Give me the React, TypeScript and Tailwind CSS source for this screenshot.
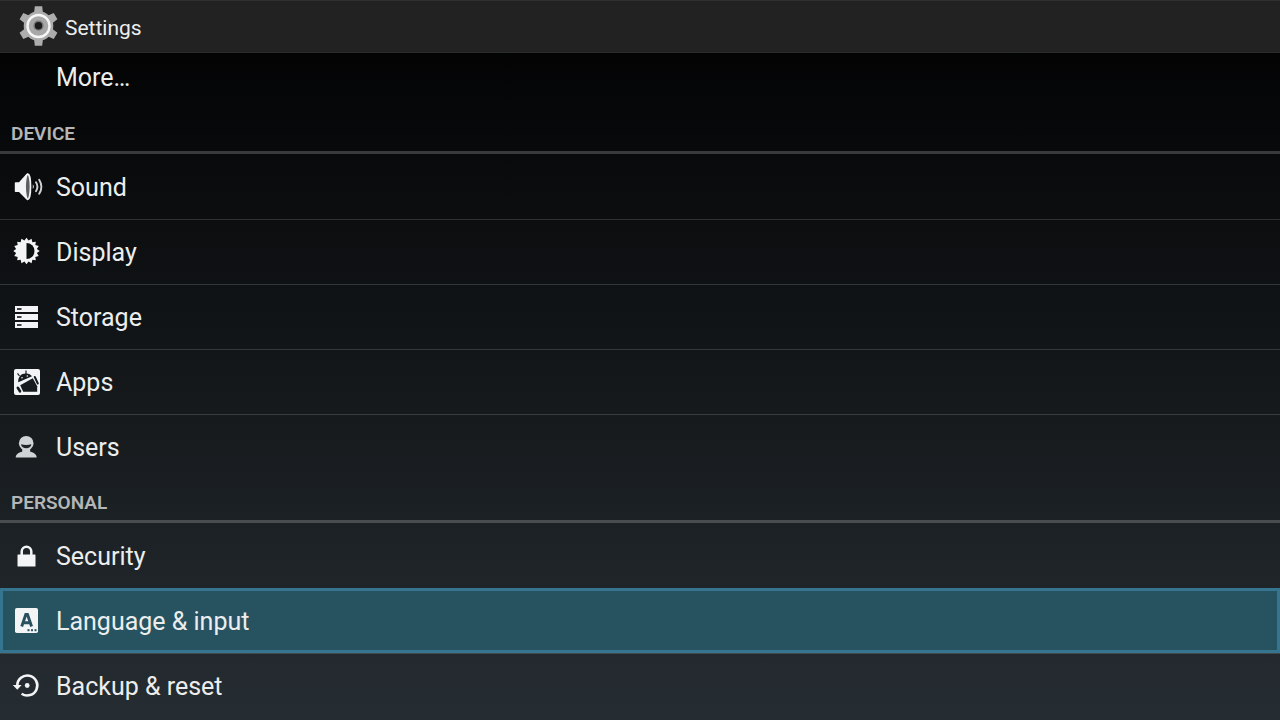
import type { ReactNode } from "react";

function Glyph({ children }: { children: ReactNode }) {
  return (
    <svg viewBox="0 0 34 34" className="size-[34px] shrink-0 text-gray-100" fill="currentColor" aria-hidden="true">
      {children}
    </svg>
  );
}

function GearLogo() {
  const teeth = [0, 60, 120, 180, 240, 300];
  return (
    <svg viewBox="0 1 42 42" className="size-[42px] shrink-0" aria-hidden="true">
      <g fill="#adadad">
        {teeth.map((angle) => (
          <path key={angle} d="M17.800 1.300h7.400l.9 8h-9.200z" transform={`rotate(${angle} 21.500 21)`} />
        ))}
        <circle cx="21.500" cy="21" r="14.800" />
      </g>
      <circle cx="21.500" cy="21" r="11" fill="#a8a8a8" stroke="#f6f6f6" strokeWidth="2.400" />
      <circle cx="21.500" cy="20.700" r="4.400" fill="#1c1c1c" stroke="#777" strokeWidth="1.400" />
    </svg>
  );
}

function SoundIcon() {
  return (
    <Glyph>
      <path d="M5.500 12.300h3.500L15.500 5c1-1.200 2.400-1.800 2.400-1.800v27s-1.400-.6-2.400-1.800L9 22H5.500q-.7 0-.7-.8v-8q0-.9.7-.9z" />
      <ellipse cx="17.800" cy="16.700" rx="2.700" ry="12.600" fill="#5c5f5f" stroke="currentColor" strokeWidth="1.700" />
      <path d="M22.800 14.300q2 2.400 0 4.800z" />
      <g fill="none" stroke="currentColor" strokeWidth="1.900" strokeLinecap="round" opacity=".85">
        <path d="M26 12.200q2.800 4.500 0 9" />
        <path d="M29.200 9.700q4.400 7 0 14" />
      </g>
    </Glyph>
  );
}

function DisplayIcon() {
  const points = Array.from({ length: 32 }, (_, i) => {
    const radius = i % 2 === 0 ? 13.2 : 10.6;
    const angle = (i * Math.PI) / 16;
    return `${(16.5 + radius * Math.sin(angle)).toFixed(2)},${(16 - radius * Math.cos(angle)).toFixed(2)}`;
  }).join(" ");
  return (
    <Glyph>
      <polygon points={points} />
      <path d="M16.500 8a8 8 0 0 1 0 16z" fill="#0b1010" />
    </Glyph>
  );
}

function StorageIcon() {
  return (
    <Glyph>
      {[6, 14, 22].map((y) => (
        <g key={y}>
          <rect x="5" y={y} width="23" height="6" />
          <rect x="7" y={y + 2} width="4.500" height="2" fill="#3b4142" />
        </g>
      ))}
    </Glyph>
  );
}

function AppsIcon() {
  return (
    <Glyph>
      <rect x="4" y="4" width="26" height="26" rx="2" />
      <g fill="#161b1e">
        <path d="M8.300 17.200c-.5-5.500 3-9 8-8.700 2.500.1 4.500 1.200 5.700 2.800z" />
        <path d="M10.200 20.200 22.800 13.200l4.400 8v5.500h-14z" />
        <path d="m9.500 11-2-2.600M16 9V5.500" stroke="#161b1e" strokeWidth="1.200" />
        <path d="m24.800 12 3 6.500" stroke="#161b1e" strokeWidth="2" strokeLinecap="round" />
        <path d="m7.800 22.800 2.200 3.500" stroke="#161b1e" strokeWidth="2.600" strokeLinecap="round" />
      </g>
      <circle cx="12" cy="12.800" r=".8" />
      <circle cx="17.300" cy="11" r=".8" />
    </Glyph>
  );
}

function UsersIcon() {
  return (
    <Glyph>
      <g fill="#d0d3d4">
        <circle cx="16.200" cy="13.200" r="7.300" />
        <path d="M5.700 27.500c.2-3.500 2.800-5 6.500-5.800v-3h8v3c3.700.8 6.300 2.300 6.500 5.800z" />
      </g>
      <path d="M11 14.300q5.200 1.400 10.400 0c-.4 5.200-10 5.200-10.400 0z" fill="#202528" />
    </Glyph>
  );
}

function LockIcon() {
  return (
    <Glyph>
      <rect x="7.500" y="15.500" width="18" height="12" rx=".6" />
      <path d="M11.700 16v-3.500a4.800 4.800 0 0 1 9.600 0V16" fill="none" stroke="currentColor" strokeWidth="2.500" />
    </Glyph>
  );
}

function LanguageIcon() {
  return (
    <Glyph>
      <rect x="5" y="4" width="23" height="25" rx="1.800" />
      <path d="m11.700 22.500 4.100-12h1.700l4.100 12M13.300 18.700h6.600" fill="none" stroke="#28505f" strokeWidth="2.900" />
      <g fill="#28505f">
        <rect x="17.500" y="25.200" width="2" height="2" />
        <rect x="21" y="25.200" width="2" height="2" />
        <rect x="24.500" y="25.200" width="2" height="2" />
      </g>
    </Glyph>
  );
}

function BackupIcon() {
  return (
    <Glyph>
      <path d="M7.300 16.500a10 10 0 1 1 4.300 8.200" fill="none" stroke="currentColor" strokeWidth="2.600" />
      <path d="M2.800 16h8.800l-4.300 4.800z" />
      <circle cx="17.200" cy="16.500" r="2.400" />
    </Glyph>
  );
}

type Item = { label: string; icon: ReactNode; selected?: boolean };

const device: Item[] = [
  { label: "Sound", icon: <SoundIcon /> },
  { label: "Display", icon: <DisplayIcon /> },
  { label: "Storage", icon: <StorageIcon /> },
  { label: "Apps", icon: <AppsIcon /> },
  { label: "Users", icon: <UsersIcon /> },
];

const personal: Item[] = [
  { label: "Security", icon: <LockIcon /> },
  { label: "Language & input", icon: <LanguageIcon />, selected: true },
  { label: "Backup & reset", icon: <BackupIcon /> },
];

function Section({ title, items }: { title: string; items: Item[] }) {
  return (
    <section>
      <h2 className="flex h-11 items-center border-b-3 border-white/20 px-[11px] pt-1.5 text-[19px] font-semibold text-[#b4b6b7]">
        {title}
      </h2>
      <ul>
        {items.map((item, index) => (
          <li key={item.label}>
            <button
              type="button"
              aria-current={item.selected ? "true" : undefined}
              className={
                item.selected
                  ? "flex h-[65px] w-full items-center gap-3 border-3 border-[#36758f] bg-[#275361] pr-4 pl-[7px] text-left"
                  : index === 0
                    ? "flex h-[65px] w-full items-center gap-3 pr-4 pl-[10px] text-left"
                    : "flex h-[65px] w-full items-center gap-3 border-t border-white/15 pr-4 pl-[10px] text-left"
              }
            >
              {item.icon}
              <span className="pt-0.5">{item.label}</span>
            </button>
          </li>
        ))}
      </ul>
    </section>
  );
}

export default function App() {
  return (
    <div className="flex h-screen flex-col overflow-hidden bg-linear-to-b/srgb from-black to-[#262d32] font-['Roboto',sans-serif] text-[25px]/8 text-[#eceeee]">
      <header className="flex h-[53px] shrink-0 items-center gap-1.5 border-t border-b border-t-[#303030] border-b-[#2c2c2c] bg-[#222] pl-[17px]">
        <GearLogo />
        <h1 className="pt-0.5 text-[21px]">Settings</h1>
      </header>
      <main className="min-h-0 flex-1 overflow-hidden">
        <button type="button" className="flex h-[57px] w-full items-start pt-[9px] pl-14 text-left">
          More…
        </button>
        <Section title="DEVICE" items={device} />
        <Section title="PERSONAL" items={personal} />
      </main>
    </div>
  );
}
